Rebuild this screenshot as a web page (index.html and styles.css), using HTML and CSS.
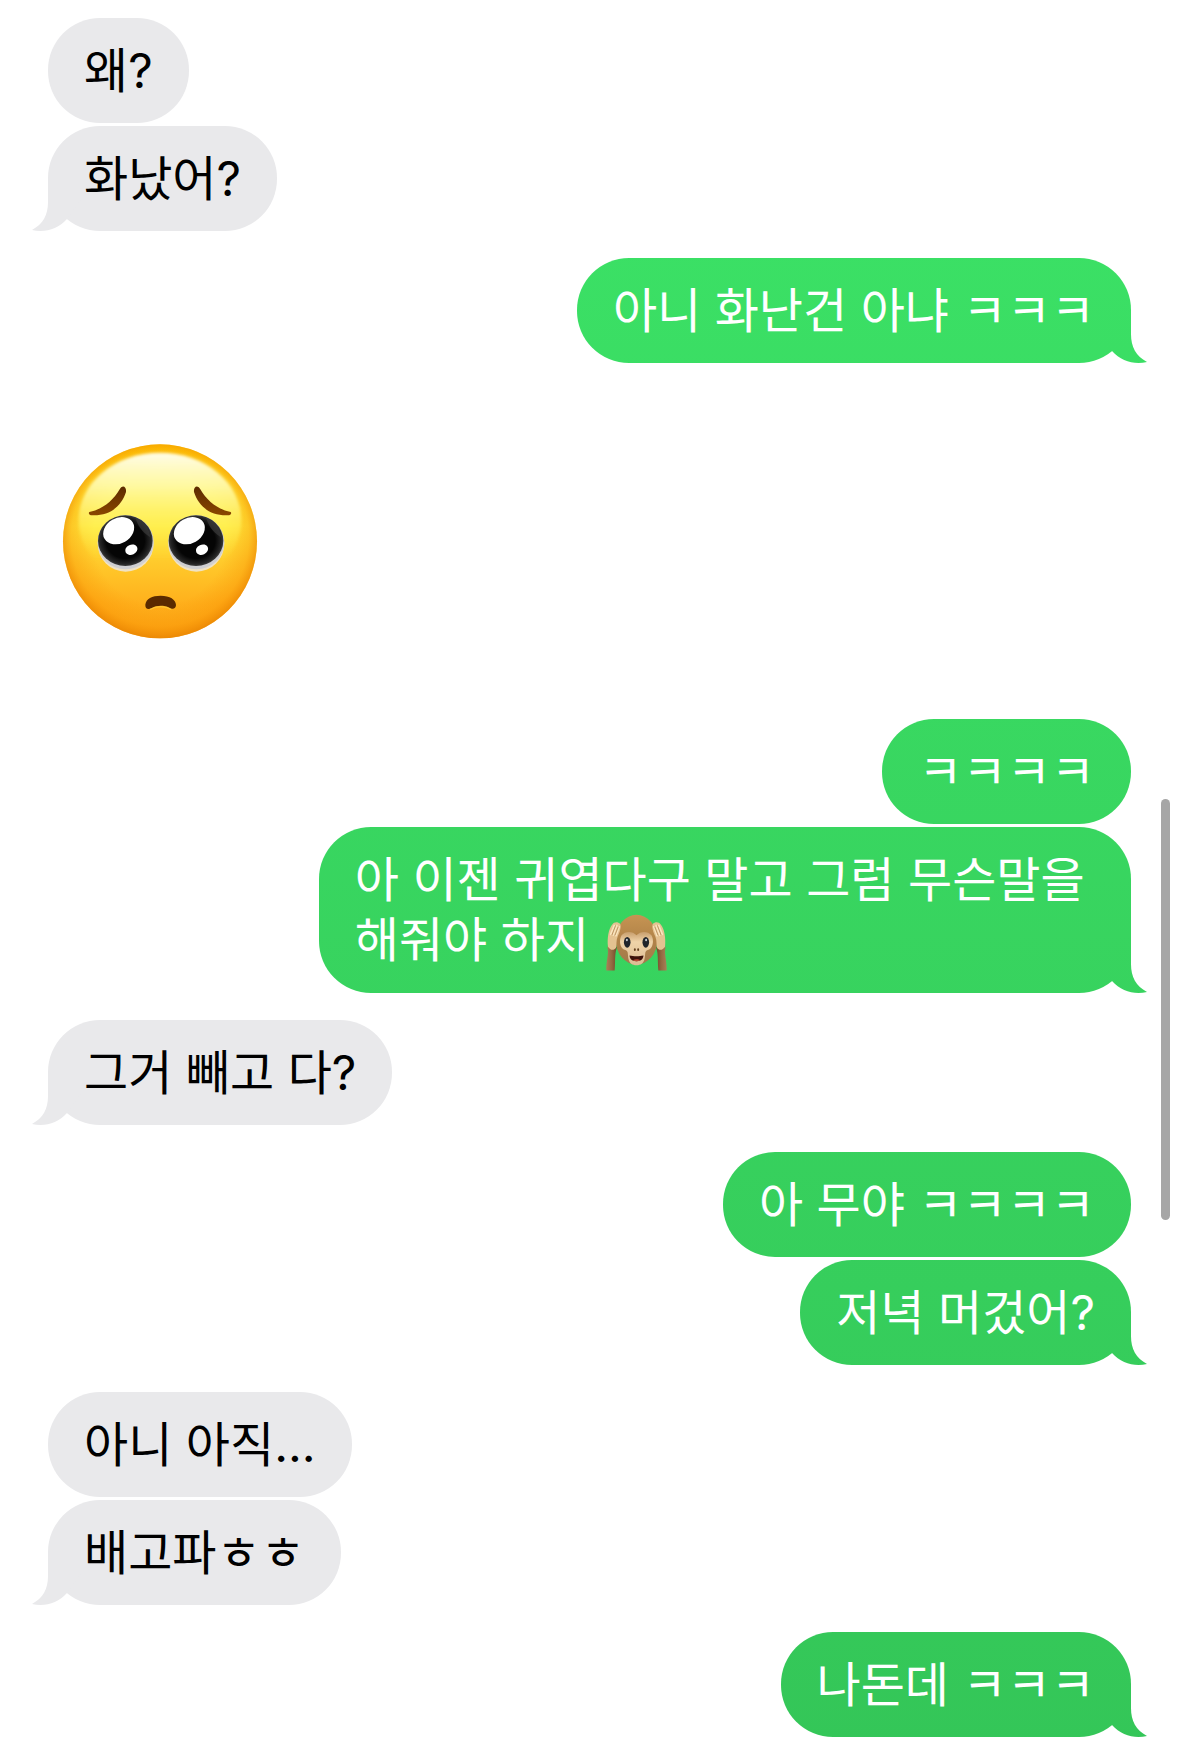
FILE: index.html
```html
<!DOCTYPE html>
<html lang="ko">
<head>
    <meta charset="UTF-8">
    <meta name="viewport" content="width=device-width, initial-scale=1.0">
    <title>메시지</title>

    <link rel="stylesheet" href="styles.css">
</head>
<body>

    <main class="chat">
        <div class="group received">
            <p class="bubble">왜?</p>
            <p class="bubble tail">화났어?</p>
        </div>

        <div class="group sent">
            <p class="bubble tail">아니 화난건 아냐 ㅋㅋㅋ</p>
        </div>

        <div class="group received">
            <svg class="big-emoji" viewBox="66 69 588 588" role="img" aria-label="애원하는 얼굴">
                <defs>
                    <linearGradient id="face" x1="0" y1="0" x2="0" y2="1">
                        <stop offset="0" stop-color="#fdc800"/>
                        <stop offset="0.2" stop-color="#ffe52e"/>
                        <stop offset="0.42" stop-color="#ffe83c"/>
                        <stop offset="0.6" stop-color="#ffcb2c"/>
                        <stop offset="0.82" stop-color="#ffb01c"/>
                        <stop offset="1" stop-color="#fba516"/>
                    </linearGradient>
                    <radialGradient id="rim" cx="0.5" cy="0.48" r="0.52">
                        <stop offset="0.66" stop-color="#f99000" stop-opacity="0"/>
                        <stop offset="0.88" stop-color="#f99000" stop-opacity="0.35"/>
                        <stop offset="1" stop-color="#e88200" stop-opacity="0.8"/>
                    </radialGradient>
                    <linearGradient id="shine" x1="0" y1="0" x2="0" y2="1">
                        <stop offset="0" stop-color="#fffde8"/>
                        <stop offset="0.25" stop-color="#fffbac" stop-opacity="0.9"/>
                        <stop offset="0.55" stop-color="#fff35a" stop-opacity="0.6"/>
                        <stop offset="0.8" stop-color="#ffe63c" stop-opacity="0"/>
                    </linearGradient>
                    <radialGradient id="eye" cx="0.5" cy="0.5" r="0.5">
                        <stop offset="0.7" stop-color="#050505"/>
                        <stop offset="0.92" stop-color="#242424"/>
                        <stop offset="1" stop-color="#3b3b3b"/>
                    </radialGradient>
                    <linearGradient id="brow" x1="0" y1="0" x2="0" y2="1">
                        <stop offset="0" stop-color="#5c2b00"/>
                        <stop offset="1" stop-color="#8a4700"/>
                    </linearGradient>
                    <filter id="soft" x="-10%" y="-10%" width="120%" height="120%">
                        <feGaussianBlur stdDeviation="5"/>
                    </filter>
                </defs>
                <circle cx="360" cy="364" r="291" fill="url(#face)"/>
                <circle cx="360" cy="364" r="291" fill="url(#rim)"/>
                <ellipse cx="360" cy="300" rx="244" ry="202" fill="url(#shine)" filter="url(#soft)"/>
                <g id="half-face">
                    <path d="M148 276 C186 268 218 244 240 206 C248 194 260 200 258 216 C244 260 208 288 157 286 C148 286 144 280 148 276Z" fill="url(#brow)"/>
                </g>
                <use href="#half-face" transform="translate(720 0) scale(-1 1)"/>
                <g id="pleading-eye">
                    <ellipse cx="257" cy="371" rx="84" ry="84" fill="#f0e2c4"/>
                    <ellipse cx="257" cy="367" rx="84" ry="81" fill="#cfcfd2"/>
                    <ellipse cx="256" cy="362" rx="82" ry="76" fill="url(#eye)"/>
                    <path d="M286 293 C314 304 328 326 331 352 C316 342 296 326 286 293Z" fill="#3a3a3a" opacity="0.7"/>
                    <ellipse cx="236" cy="332" rx="49" ry="38" transform="rotate(-30 236 332)" fill="#fff"/>
                    <ellipse cx="274" cy="389" rx="19" ry="15" transform="rotate(-25 274 389)" fill="#fff"/>
                </g>
                <use href="#pleading-eye" x="212"/>
                <path d="M316 554 C318 536 336 527 362 527 C390 527 407 538 408 555 C408 566 398 570 388 563 C372 555 350 555 336 564 C324 571 315 566 316 554Z" fill="#5a2a00"/>
                <path d="M330 568 C350 557 376 558 394 568" fill="none" stroke="#ffd23c" stroke-width="4" opacity="0.7"/>
            </svg>
        </div>

        <div class="group sent">
            <p class="bubble">ㅋㅋㅋㅋ</p>
            <p class="bubble tail">아 이젠 귀엽다구 말고 그럼 무슨말을 해줘야 하지
                <svg class="emoji" viewBox="43 42 187 171" role="img" aria-label="귀를 막은 원숭이">
                    <defs>
                        <linearGradient id="fur" x1="0" y1="0" x2="0" y2="1">
                            <stop offset="0" stop-color="#c69453"/>
                            <stop offset="0.5" stop-color="#b18348"/>
                            <stop offset="1" stop-color="#a27a4c"/>
                        </linearGradient>
                        <linearGradient id="arm" x1="0" y1="0" x2="1" y2="0">
                            <stop offset="0" stop-color="#a98058"/>
                            <stop offset="0.5" stop-color="#946a42"/>
                            <stop offset="1" stop-color="#704a2a"/>
                        </linearGradient>
                        <linearGradient id="skin" x1="0" y1="0" x2="0" y2="1">
                            <stop offset="0" stop-color="#c79d6c"/>
                            <stop offset="0.3" stop-color="#efd3a8"/>
                            <stop offset="1" stop-color="#dcbc94"/>
                        </linearGradient>
                    </defs>
                    <ellipse cx="135" cy="119" rx="63" ry="75" fill="url(#fur)"/>
                    <path d="M135 106 C124 92 100 92 90 106 C83 118 84 136 92 145 C98 151 106 150 108 156 C110 164 109 170 111 178 C114 190 122 196 135 196 C148 196 156 190 159 178 C161 170 160 164 162 156 C164 150 172 151 178 145 C186 136 187 118 180 106 C170 92 146 92 135 106Z" fill="url(#skin)"/>
                    <g id="monkey-side">
                        <path d="M47 140 C53 160 43 183 44 212 H69 C72 188 68 164 76 142Z" fill="url(#arm)"/>
                        <path d="M49 140 C46 115 51 85 62 73 C67 65 79 64 85 71 C91 78 84 98 78 110 C73 122 76 132 73 143 C66 153 56 151 49 140Z" fill="#e4c291"/>
                        <path d="M57 103 L68 76 M65 105 L76 76 M73 107 L83 80" fill="none" stroke="#fae4be" stroke-width="5" stroke-linecap="round"/>
                        <path d="M61 105 L72 76 M70 106 L80 80" fill="none" stroke="#a87e4c" stroke-width="2"/>
                        <ellipse cx="107" cy="127" rx="10" ry="16" fill="#20242a"/>
                        <ellipse cx="106" cy="120" rx="3" ry="4" fill="#c4cbd2"/>
                    </g>
                    <use href="#monkey-side" transform="translate(270 0) scale(-1 1)"/>
                    <ellipse cx="130" cy="149" rx="3" ry="4" fill="#65411f"/>
                    <ellipse cx="140" cy="149" rx="3" ry="4" fill="#65411f"/>
                    <path d="M114 167 C126 170 144 170 156 167 C155 180 146 184 135 184 C124 184 115 180 114 167Z" fill="#3c120a"/>
                    <path d="M124 181 C130 177 141 177 146 181 C141 185 129 185 124 181Z" fill="#b94b37"/>
                </svg>
            </p>
        </div>

        <div class="group received">
            <p class="bubble tail">그거 빼고 다?</p>
        </div>

        <div class="group sent">
            <p class="bubble">아 무야 ㅋㅋㅋㅋ</p>
            <p class="bubble tail">저녁 머겄어?</p>
        </div>

        <div class="group received">
            <p class="bubble">아니 아직...</p>
            <p class="bubble tail">배고파ㅎㅎ</p>
        </div>

        <div class="group sent">
            <p class="bubble tail">나돈데 ㅋㅋㅋ</p>
        </div>
    </main>

    <div class="scroll-thumb"></div>

</body>
</html>
```
FILE: styles.css
```css
* {
    box-sizing: border-box;
}

body {
    margin: 0;
    background-color: #fff;
    font-family: Inter, "Noto Sans CJK KR", sans-serif;
    font-size: 48px;
    line-height: 60px;
}

.chat {
    display: flex;
    flex-direction: column;
    gap: 27px;
    padding: 18px 48px 14px;
}

.group {
    display: flex;
    flex-direction: column;
    gap: 3px;
}

.received {
    align-items: flex-start;
}

.sent {
    align-items: flex-end;
}

.bubble {
    position: relative;
    max-width: 75%;
    margin: 0;
    padding: 23px 36px 22px;
    border-radius: 52px;
    word-break: keep-all;
}

.received .bubble,
.received .tail::after {
    background-color: #e9e9eb;
    color: #000;
}

/* one gradient for the whole window, seen through every sent bubble */
.sent .bubble,
.sent .tail::after {
    background: linear-gradient(#3ce467, #34c658) fixed;
    color: #fff;
}

.tail::after {
    content: "";
    position: absolute;
    bottom: 0;
    width: 50px;
    height: 53px;
}

.received .tail::after {
    left: -16px;
    clip-path: path("M16 0 V24 C16 37 11 46 0 52 C13 55 26 51 35 41 L50 20 V0 Z");
}

.sent .tail::after {
    right: -16px;
    clip-path: path("M34 0 V24 C34 37 39 46 50 52 C37 55 24 51 15 41 L0 20 V0 Z");
}

.big-emoji {
    width: 196px;
    height: 196px;
    margin: 53px 14px;
}

.emoji {
    width: 62px;
    height: 57px;
    margin-left: 3px;
    vertical-align: -14px;
}

.scroll-thumb {
    position: fixed;
    top: 799px;
    right: 9px;
    width: 9px;
    height: 24%;
    border-radius: 5px;
    background-color: #a6a6a6;
}
```
